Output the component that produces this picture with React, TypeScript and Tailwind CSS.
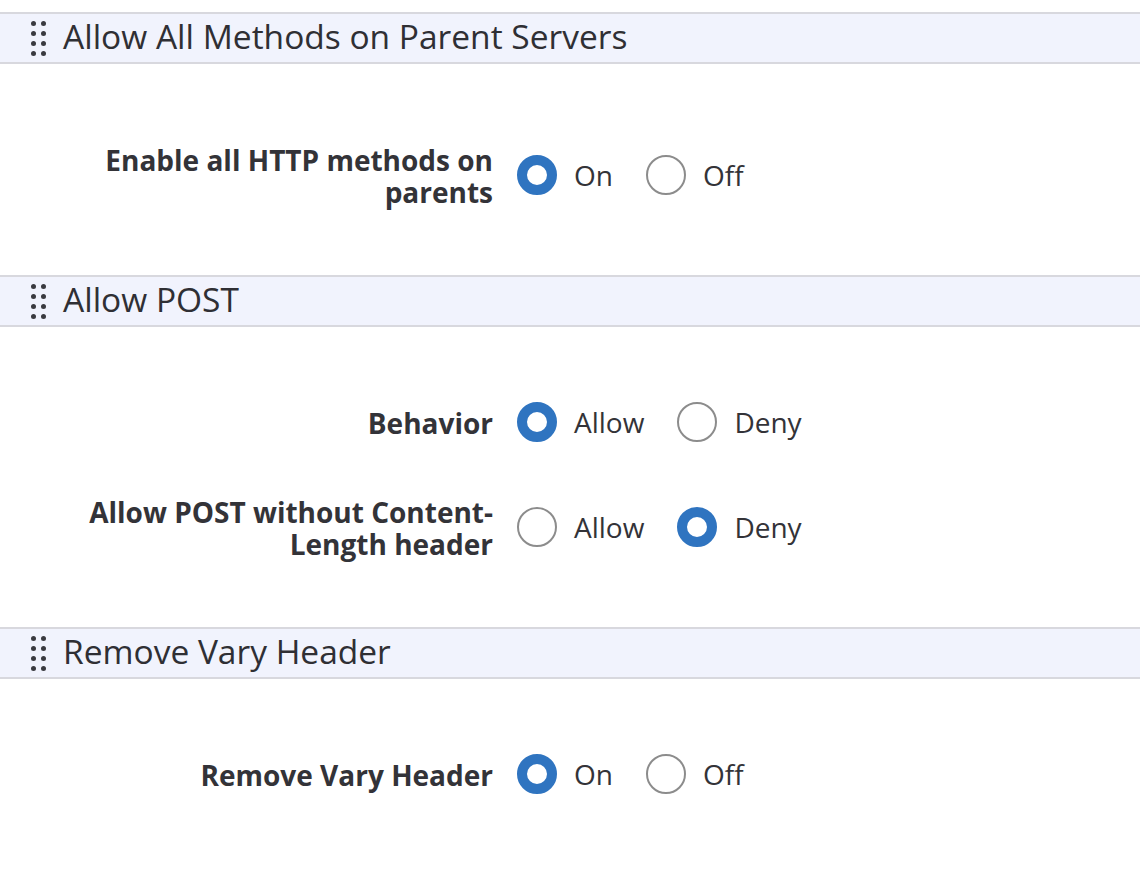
import React from "react";

type Opt = { label: string; checked: boolean };
type Row = { label: React.ReactNode; options: Opt[] };
type Section = { title: string; rows: Row[] };

const sections: Section[] = [
  {
    title: "Allow All Methods on Parent Servers",
    rows: [
      {
        label: (
          <>
            Enable all HTTP methods on
            <br />
            parents
          </>
        ),
        options: [
          { label: "On", checked: true },
          { label: "Off", checked: false },
        ],
      },
    ],
  },
  {
    title: "Allow POST",
    rows: [
      {
        label: "Behavior",
        options: [
          { label: "Allow", checked: true },
          { label: "Deny", checked: false },
        ],
      },
      {
        label: (
          <>
            Allow POST without Content-
            <br />
            Length header
          </>
        ),
        options: [
          { label: "Allow", checked: false },
          { label: "Deny", checked: true },
        ],
      },
    ],
  },
  {
    title: "Remove Vary Header",
    rows: [
      {
        label: "Remove Vary Header",
        options: [
          { label: "On", checked: true },
          { label: "Off", checked: false },
        ],
      },
    ],
  },
];

function Handle() {
  return (
    <div className="grid grid-cols-2 gap-x-[5px] gap-y-[5px] w-[15px]">
      {Array.from({ length: 8 }).map((_, i) => (
        <span key={i} className="block w-[5px] h-[5px] rounded-full bg-[#3a3a40]" />
      ))}
    </div>
  );
}

function Radio({ checked }: { checked: boolean }) {
  return checked ? (
    <span className="block w-[40px] h-[40px] rounded-full border-[10px] border-[#2f74c0] bg-white box-border" />
  ) : (
    <span className="block w-[40px] h-[40px] rounded-full border-2 border-[#8c8c8c] bg-white box-border" />
  );
}

export default function App() {
  return (
    <div
      className="w-[1140px] h-[886px] bg-white pt-[12px] text-[#333338] overflow-hidden"
      style={{ fontFamily: "'Open Sans', Lato, sans-serif" }}
    >
      {sections.map((s, si) => (
        <div key={si}>
          <div className="h-[52px] border-y-2 border-[#d8d8de] bg-[#f1f3fd] flex items-center pl-[31px] gap-[17px]">
            <Handle />
            <div className="text-[33.5px] leading-none text-[#2f2f34] -mt-[2px]">{s.title}</div>
          </div>
          <div className="pt-[80px] pb-[67px] flex flex-col gap-[57px]">
            {s.rows.map((r, ri) => (
              <div key={ri} className="flex items-center">
                <div className="w-[493px] text-right font-bold text-[28px] leading-[32px]">
                  {r.label}
                </div>
                <div className="flex items-center pl-[24px] h-[32px] -mt-[3px]">
                  {r.options.map((o, oi) => (
                    <label key={oi} className="flex items-center mr-[33px]">
                      <Radio checked={o.checked} />
                      <span className="ml-[17px] text-[28px] leading-[32px]">{o.label}</span>
                    </label>
                  ))}
                </div>
              </div>
            ))}
          </div>
        </div>
      ))}
    </div>
  );
}
